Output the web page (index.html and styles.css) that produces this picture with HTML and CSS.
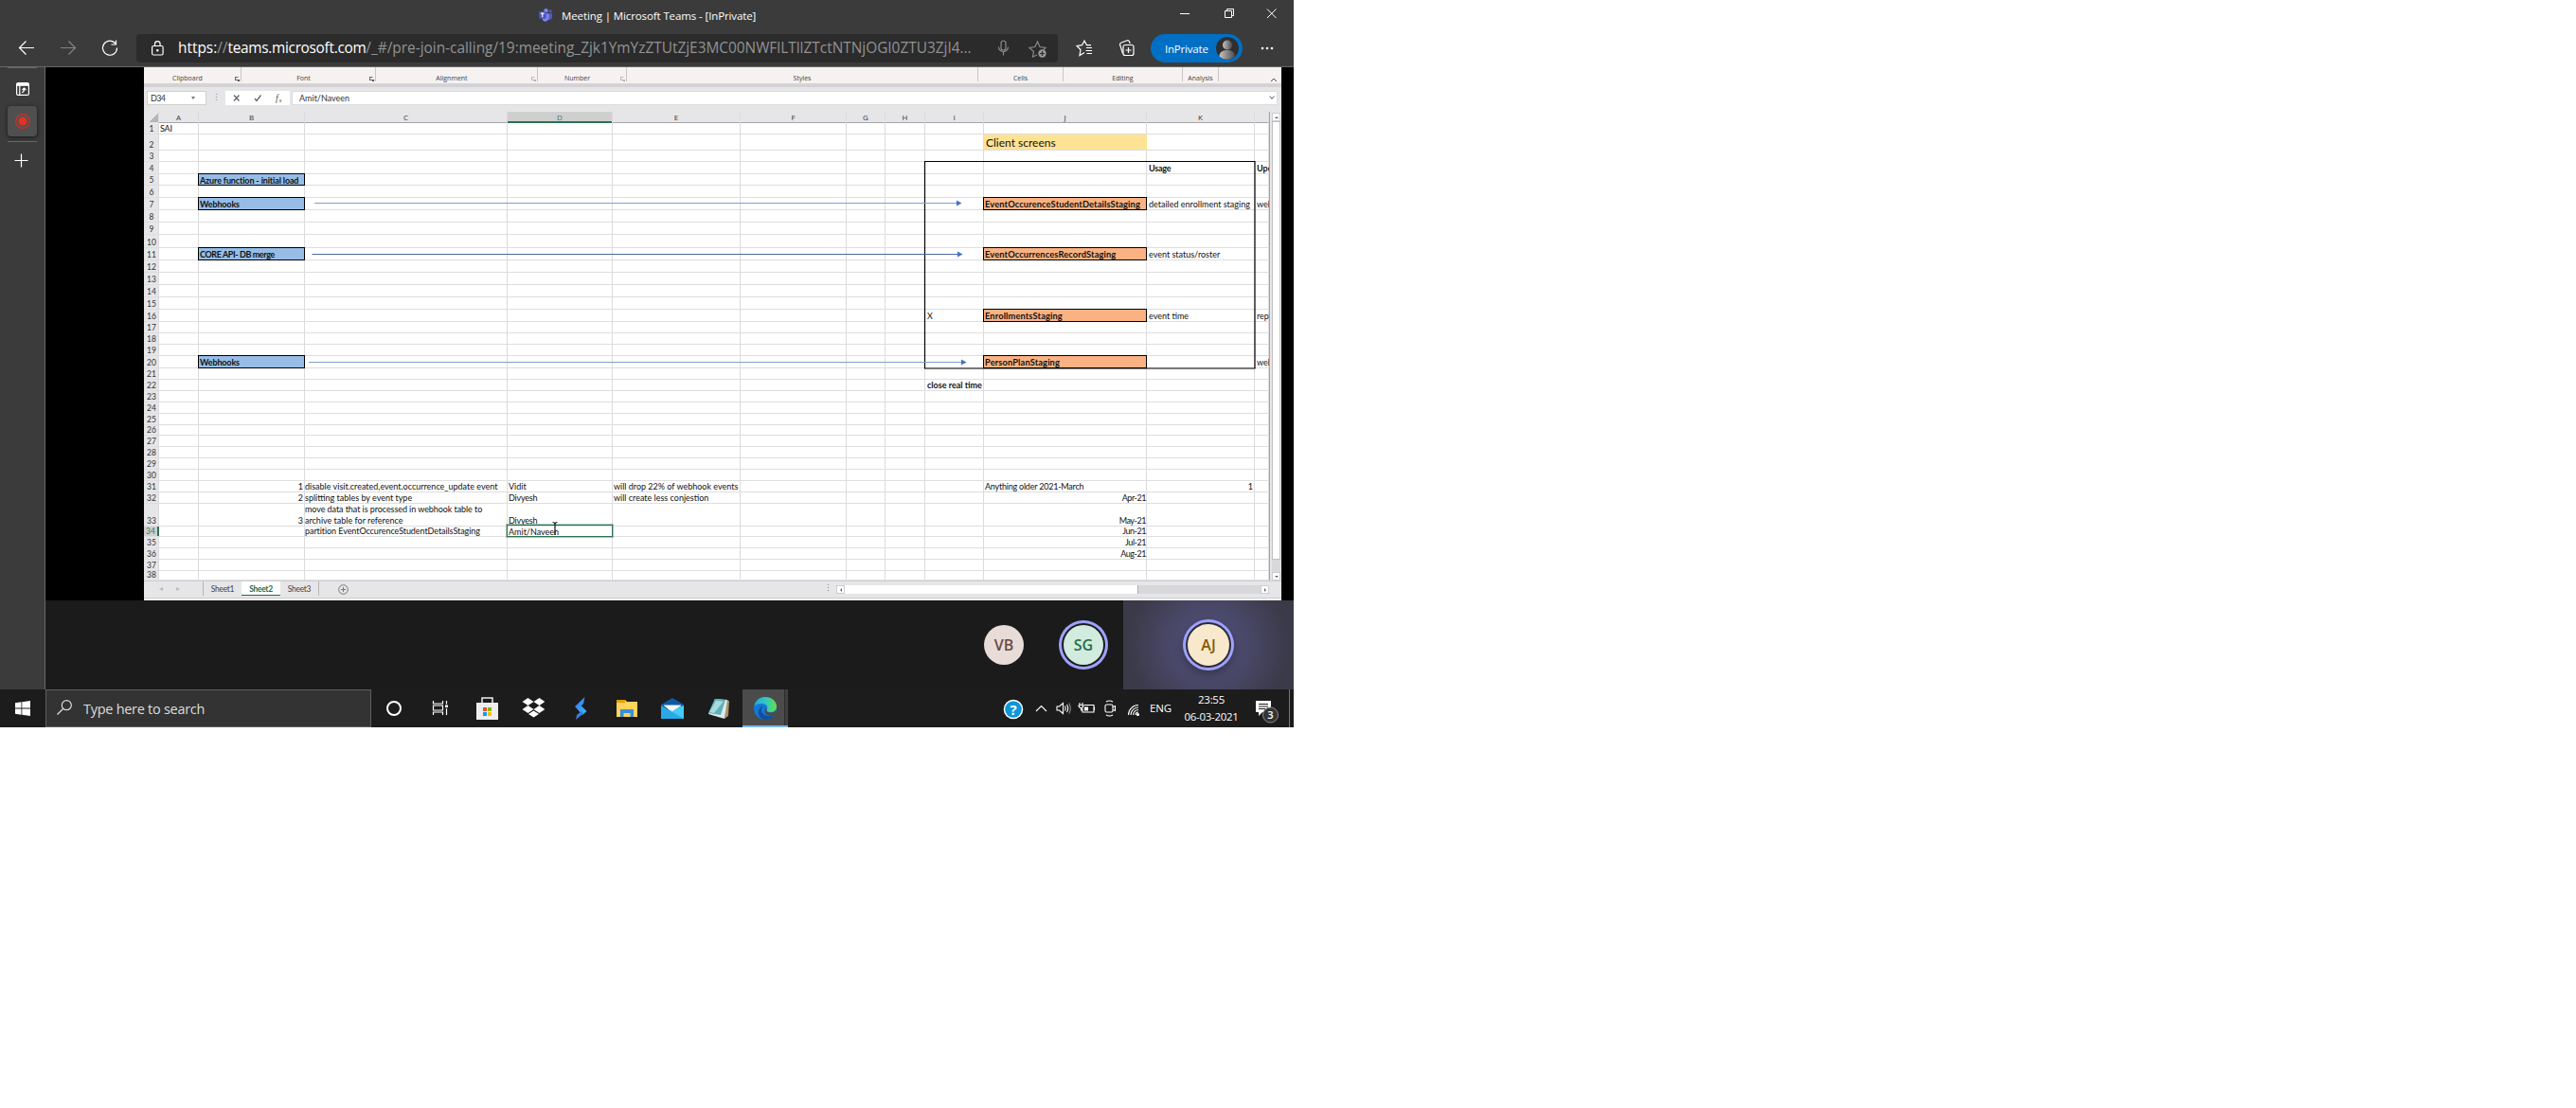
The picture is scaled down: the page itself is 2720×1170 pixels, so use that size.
FILE: index.html
```html
<!DOCTYPE html>
<html lang="en">
<head>
<meta charset="utf-8">
<title>Meeting | Microsoft Teams</title>
<link rel="stylesheet" href="styles.css">
</head>
<body>
<div class="desktop">
  <header class="titlebar">
    <div class="title">
      <svg class="teams" viewBox="0 0 16 16"><circle cx="8" cy="2.800" r="2.400" fill="#7b83eb"/><circle cx="13" cy="3.600" r="1.700" fill="#5059c9"/><path d="M10 6h5v4.500a2.800 2.800 0 0 1-5 1.500z" fill="#5059c9"/><path d="M4 6h7.500v5.500a4 4 0 0 1-7.500 1.500z" fill="#7b83eb"/><rect y="4" width="8" height="8" rx=".8" fill="#4b53bc"/><path d="M2 6h4M4 6v4.500" stroke="#fff" stroke-width="1.200"/></svg>
      <span>Meeting | Microsoft Teams - [InPrivate]</span>
    </div>
    <svg class="winctl" viewBox="0 0 110 28" fill="none" stroke="#fff"><path d="M0 14.500h10M47.500 11.500h7v7h-7zM49.500 11.500v-2h7v7h-2M92 9.500l9.500 9.500M101.500 9.500L92 19"/></svg>
  </header>

  <nav class="toolbar">
    <svg class="navicons" viewBox="0 0 144 30" fill="none" stroke="#fff" stroke-width="1.200"><path d="M36 14.500H20.500M27.500 7.500l-7 7 7 7"/><path stroke="#858585" d="M64 14.500h15.500M72.500 7.500l7 7-7 7"/><path d="M122 10.200a7.500 7.500 0 1 0 1.500 4.300M122.500 6.500v4.500H117.500"/></svg>
    <div class="address">
      <svg class="lock" viewBox="0 0 13 16" fill="none" stroke="#fff" stroke-width="1.200"><rect x=".6" y="5.500" width="11.500" height="9.500" rx="1.500"/><path d="M3.500 5.500V3.500a2.800 2.800 0 0 1 5.600 0v2"/><circle cx="6.300" cy="10.300" r=".7" fill="#fff"/></svg>
      <span class="url"><span class="host">https:<i>//</i></span><span class="host domain">teams.microsoft.com</span><span>/_#/pre-join-calling/19:meeting_Zjk1YmYzZTUtZjE3MC00NWFlLTllZTctNTNjOGI0ZTU3ZjI4...</span></span>
      <svg class="addricons" viewBox="0 0 54 20" fill="none" stroke="#8a8a8a" stroke-width="1.200"><rect x="4" y="2" width="5" height="10" rx="2.500"/><path d="M1.500 8.500a5 5 0 0 0 10 0M6.500 13.500v4"/><path d="M42 17l-4.500 2 1-5.500-4.500-4 5.800-1L42.500 3 45 8.500l6 1-2 2"/><circle cx="47.500" cy="15.500" r="4.200" fill="#999" stroke="none"/><path d="M45 15.500h5M47.500 13v5" stroke="#2b2b2b"/></svg>
    </div>
    <svg class="favicons" viewBox="0 0 62 20" fill="none" stroke="#fff" stroke-width="1.200"><path d="M9 14.500l-5 3 1-6L1 7.500l5.500-.8L9 2l2.500 4.700h4.500M11 9.500h6M10.500 12.500h6.500M11.500 15.500H17"/><path d="M49.500 15.500l-3-9.500a2 2 0 0 1 1.500-2l6-2.200a2 2 0 0 1 2.500 1.200l.8 2"/><rect x="50" y="6.500" width="11" height="11" rx="2"/><path d="M55.500 9v6M52.500 12h6"/></svg>
    <div class="pill"><span>InPrivate</span>
      <svg viewBox="0 0 24 24" class="avatar"><defs><linearGradient id="g"><stop offset="0" stop-color="#c4c4c4"/><stop offset="1" stop-color="#4a4a4a"/></linearGradient></defs><circle cx="12" cy="12" r="12" fill="#2f2f2f"/><circle cx="12" cy="8.500" r="5" fill="url(#g)"/><path d="M3.500 20.500c0-5 4-6.500 8.500-6.500s8 1.500 8 6.500a12 12 0 0 1-16.500 0z" fill="url(#g)"/></svg>
    </div>
    <svg class="dots" viewBox="0 0 14 4" fill="#fff"><circle cx="2" cy="2" r="1.300"/><circle cx="7" cy="2" r="1.300"/><circle cx="12" cy="2" r="1.300"/></svg>
  </nav>

  <div class="middle">
    <aside class="sidebar">
      <svg class="tabicon" viewBox="0 0 14 14" fill="none" stroke="#fff" stroke-width="1.200"><rect x=".6" y=".6" width="12.800" height="12.800" rx="1.500"/><path d="M1 2.300h12" stroke-width="3"/><path d="M3.800 3v10.500M6 10.500c2 0 2.500-1 2.500-4M6.500 8l2-2 2 2"/></svg>
      <div class="rec"><svg viewBox="0 0 16 16"><circle cx="8" cy="8" r="7.300" fill="none" stroke="#d93025" stroke-width="1.200"/><circle cx="8" cy="8" r="4.500" fill="#e03226"/></svg></div>
      <svg class="add" viewBox="0 0 15 15" stroke="#fff" stroke-width="1.200"><path d="M7.500 .5v14M.5 7.500h14"/></svg>
    </aside>

    <main class="stage">
      <section class="excel">
        <div class="ribbon">
          <div class="grp g1"><span>Clipboard</span><b></b></div>
          <div class="grp g2"><span>Font</span><b></b></div>
          <div class="grp g3"><span>Alignment</span><b class="off"></b></div>
          <div class="grp g4"><span>Number</span><b class="off"></b></div>
          <div class="grp g5"><span>Styles</span></div>
          <div class="grp g6"><span>Cells</span></div>
          <div class="grp g7"><span>Editing</span></div>
          <div class="grp g8"><span>Analysis</span></div>
          <svg class="chev" viewBox="0 0 8 5" fill="none" stroke="#555"><path d="M1 4l3-3 3 3"/></svg>
        </div>
        <div class="formula">
          <div class="namebox"><span>D34</span><i class="down"></i></div>
          <div class="grip">⋮</div>
          <svg class="fx" viewBox="0 0 68 15" fill="none" stroke="#666" stroke-width="1.300"><path d="M9 4.500l5.500 6M14.500 4.500L9 10.500M31 8l2 2.500 4.500-6"/><text x="53" y="11" class="fxt">f</text><text x="56.500" y="12" class="fxs">x</text></svg>
          <div class="finput"><span>Amit/Naveen</span><i class="vee"></i></div>
        </div>
        <div class="sheetwrap">
          <div class="sheet">
            <div class="cols">
              <div class="corner"></div><div>A</div><div>B</div><div>C</div><div class="sel">D</div><div>E</div><div>F</div><div>G</div><div>H</div><div>I</div><div>J</div><div>K</div><div></div>
            </div>
            <div class="rows">
              <div class="row"><b>1</b><span class="cA tight">SAI</span></div>
              <div class="row"><b>2</b><span class="cJ yellow">Client screens</span></div>
              <div class="row"><b>3</b></div>
              <div class="row"><b>4</b><span class="cK bold tight">Usage</span><span class="cL bold">Upd</span></div>
              <div class="row"><b>5</b><span class="cB blue">Azure function - initial load</span></div>
              <div class="row"><b>6</b></div>
              <div class="row"><b>7</b><span class="cB blue">Webhooks</span><span class="cJ orange">EventOccurenceStudentDetailsStaging</span><span class="cK">detailed enrollment staging</span><span class="cL">web</span></div>
              <div class="row"><b>8</b></div>
              <div class="row"><b>9</b></div>
              <div class="row"><b>10</b></div>
              <div class="row"><b>11</b><span class="cB blue core">CORE API- DB merge</span><span class="cJ orange">EventOccurrencesRecordStaging</span><span class="cK">event status/roster</span></div>
              <div class="row"><b>12</b></div>
              <div class="row"><b>13</b></div>
              <div class="row"><b>14</b></div>
              <div class="row"><b>15</b></div>
              <div class="row"><b>16</b><span class="cI">X</span><span class="cJ orange">EnrollmentsStaging</span><span class="cK">event time</span><span class="cL">repo</span></div>
              <div class="row"><b>17</b></div>
              <div class="row"><b>18</b></div>
              <div class="row"><b>19</b></div>
              <div class="row"><b>20</b><span class="cB blue">Webhooks</span><span class="cJ orange">PersonPlanStaging</span><span class="cL">web</span></div>
              <div class="row"><b>21</b></div>
              <div class="row"><b>22</b><span class="cI bold">close real time</span></div>
              <div class="row"><b>23</b></div>
              <div class="row"><b>24</b></div>
              <div class="row"><b>25</b></div>
              <div class="row"><b>26</b></div>
              <div class="row"><b>27</b></div>
              <div class="row"><b>28</b></div>
              <div class="row"><b>29</b></div>
              <div class="row"><b>30</b></div>
              <div class="row"><b>31</b><span class="cB num">1</span><span class="cC">disable visit.created,event.occurrence_update event</span><span class="cD">Vidit</span><span class="cE">will drop 22% of webhook events</span><span class="cJ tight">Anything older 2021-March</span><span class="cK num">1</span></div>
              <div class="row"><b>32</b><span class="cB num">2</span><span class="cC">splitting tables by event type</span><span class="cD tight">Divyesh</span><span class="cE">will create less conjestion</span><span class="cJ num date">Apr-21</span></div>
              <div class="row"><b>33</b><span class="cB num">3</span><span class="cC wrap"><span class="snug">move data that is processed in webhook table to</span><br>archive table for reference</span><span class="cD tight">Divyesh</span><span class="cJ num date">May-21</span></div>
              <div class="row active"><b>34</b><span class="cC snug">partition EventOccurenceStudentDetailsStaging</span><span class="cD cur">Amit/Naveen</span><span class="cJ num date">Jun-21</span></div>
              <div class="row"><b>35</b><span class="cJ num date">Jul-21</span></div>
              <div class="row"><b>36</b><span class="cJ num date">Aug-21</span></div>
              <div class="row"><b>37</b></div>
              <div class="row"><b>38</b></div>
            </div>
            <svg class="overlay" viewBox="0 0 1188 495" fill="none">
              <path d="M824.500 52.500h348.500v218.500H824.500z" stroke="#000" stroke-width="1.200"/>
              <path d="M180 96.500h679M174 264.500h691" stroke="#7f9fcc"/><path d="M177.500 150.500h684" stroke="#4d6a9e"/>
              <path d="M858 93.500l5.500 3-5.500 3zM859 147.500l5.500 3-5.500 3zM863 261.500l5.500 3-5.500 3z" fill="#4472c4"/>
              <path d="M431.500 433.500q2.500 0 2.500 2q0-2 2.500-2M434 435v12" stroke="#111" stroke-width="1.200"/>
            </svg>
          </div>
          <div class="vscroll"><i class="btn up"></i><i class="thumb"></i><i class="track"></i><i class="btn dn"></i></div>
        </div>
        <div class="tabs">
          <span class="arr">◂</span><span class="arr">▸</span>
          <div class="tab first">Sheet1</div><div class="tab on">Sheet2</div><div class="tab last">Sheet3</div>
          <svg class="plus" viewBox="0 0 11 11" fill="none" stroke="#777"><circle cx="5.500" cy="5.500" r="4.800"/><path d="M5.500 3v5M3 5.500h5"/></svg>
          <span class="grip2">⋮</span>
          <div class="hscroll"><i class="btn lf"></i><i class="thumb"></i><i class="track"></i><i class="btn rt"></i></div>
        </div>
      </section>
      <section class="people">
        <div class="face vb">VB</div>
        <div class="face sg">SG</div>
        <div class="tile"><div class="face aj">AJ</div></div>
      </section>
    </main>
  </div>

  <footer class="taskbar">
    <div class="start"><svg viewBox="0 0 16 16" fill="#fff"><path d="M0 2.200l6.500-.9v6.300H0zM7.300 1.200L16 0v7.600H7.300zM0 8.400h6.500v6.300L0 13.800zM7.300 8.400H16V16l-8.700-1.200z"/></svg></div>
    <div class="search"><svg viewBox="0 0 16 16" fill="none" stroke="#ddd" stroke-width="1.200"><circle cx="10.300" cy="5.700" r="5"/><path d="M6.500 9.500L.5 15.500"/></svg><span>Type here to search</span></div>
    <div class="apps">
      <svg viewBox="0 0 24 24" fill="none"><circle cx="12" cy="12" r="7" stroke="#fff" stroke-width="2"/></svg>
      <svg viewBox="0 0 24 24" fill="none" stroke="#fff" stroke-width="1.200"><path d="M4.500 4v3h10V4M4.500 19v-3h10v3M4.500 9h10v5h-10zM18.500 4v3.500M18.500 12v7"/><path d="M17 8.500h3v2.500h-3z" fill="#fff" stroke="none"/></svg>
      <svg viewBox="0 0 24 24"><path d="M7 7V1h11v6" fill="none" stroke="#eee" stroke-width="1.500"/><path d="M1 6h23v18H1z" fill="#eee"/><path d="M8 11h4v4H8z" fill="#f25022"/><path d="M13 11h4v4h-4z" fill="#7fba00"/><path d="M8 16h4v4H8z" fill="#00a4ef"/><path d="M13 16h4v4h-4z" fill="#ffb900"/></svg>
      <svg viewBox="0 0 24 24" fill="#fff"><path d="M6.500 1l6 4-6 4-6-4zM18.500 1l6 4-6 4-6-4zM6.500 9l6 4-6 4-6-4zM18.500 9l6 4-6 4-6-4zM12.500 14.500l5.500 3.500-5.500 3.500L7 18z"/></svg>
      <svg viewBox="0 0 24 24"><defs><linearGradient id="s" x2="1" y2="1"><stop offset="0" stop-color="#3e67f2"/><stop offset="1" stop-color="#2fc7ee"/></linearGradient></defs><path d="M17.500 0l-1.500 7-6 6-3-3zM7 10l4-3.500 8.500 8.500-4.500 4z" fill="url(#s)"/><path d="M8 24l1-5 5-4 2 2.500z" fill="#3b7de0"/></svg>
      <svg viewBox="0 0 24 24"><path d="M2 3h9l2 2h11v16H2z" fill="#ffd45c"/><path d="M2 3h9v3H2z" fill="#e3a008"/><path d="M6 13h14v8h-3.500v-4h-7v4H6z" fill="#3b8fd8"/></svg>
      <svg viewBox="0 0 24 24"><path d="M0 8l12-7 12 7v4H0z" fill="#0c59a4"/><path d="M2.500 8.500h19L12 17z" fill="#f5f5f5"/><path d="M0 9l12 7 12-7v14H0z" fill="#2aa9ea"/><path d="M24 9v14L9 14z" fill="#45cbf7"/><path d="M3 9h18l-9 6z" fill="#f5f5f5"/></svg>
      <svg viewBox="0 0 24 24"><path d="M20 3l3 1-1 16-4 3z" fill="#a79268"/><path d="M8 2l13 1-3 20L1 18z" fill="#dfe9e9"/><path d="M8 2l11 1-5 16L1 17z" fill="#5fb0b8"/><path d="M9 4l8 .5L7 17l-5-1z" fill="#a9dadd"/></svg>
      <div class="edge"><svg viewBox="0 0 24 24"><defs><linearGradient id="e1" x1="0" x2="1"><stop offset="0" stop-color="#27a8e0"/><stop offset=".55" stop-color="#35c9bd"/><stop offset="1" stop-color="#66dd44"/></linearGradient></defs><circle cx="12" cy="12" r="12" fill="#1478d4"/><path d="M.3 10C1.500 4 6 0 12 0c7 0 12 4.500 12 10 0 4-3 6-6.500 6-3 0-4.500-1-4-2.500 1.500-2 1-5-2.500-6C7.500 6.500 3 7 .3 10z" fill="url(#e1)"/><path d="M8 13c0 6 6 9 14 6-3 4-6 5-10 5-5 0-8-5-7-9 .6-3 2-5 5.500-6C8.500 10 8 11.500 8 13z" fill="#0f50a0"/><path d="M13.500 13.500c-.5 2 1.500 3 4 3 2 0 4-.6 5-2l1 1.500-2 3.500c-6 1.500-10-1-10-4.500 0-1.500.5-2.500 1-3 .8.2 1.200.7 1 1.500z" fill="#4b4b4b"/></svg></div>
    </div>
    <div class="tray">
      <svg class="help" viewBox="0 0 22 22"><circle cx="11" cy="11" r="10.300" fill="#fff"/><circle cx="11" cy="11" r="8.800" fill="#0d97d8"/><text x="11" y="16.500">?</text></svg>
      <svg class="trayicons" viewBox="0 0 112 20" fill="none" stroke="#fff" stroke-width="1.100"><path d="M1 13l5.500-5.500L12 13"/><path d="M23 8h2.500l4-3.500v11l-4-3.500H23zM31.500 7.500q1.500 2.500 0 5M33.500 6q2.500 4 0 8"/><path stroke="#888" d="M35.800 4.500q3 5.500 0 11"/><path d="M52 6.500h10v7.500H50v-4M62.500 8.500v3.500M47 4v2.500M50 4v2.500M46 6.500h5q0 3-2.500 3t-2.500-3M48.500 9.500v2.500h2"/><path d="M52.500 9h3v3h-3z" fill="#fff"/><rect x="74" y="6" width="8" height="8" rx="1.500"/><path d="M82 8.500l2.500-1v5l-2.500-1M75 3q3.500-2 7 0M75 17q3.500 2 7 0"/><path d="M98.500 17A10.500 10.500 0 0 1 109 6.500M101 17a8 8 0 0 1 8-8M103.500 17a5.500 5.500 0 0 1 5.500-5.500M106 17a3 3 0 0 1 3-3"/><circle cx="108.500" cy="16.500" r="1" fill="#fff"/></svg>
      <span class="lang">ENG</span>
      <div class="clock"><span>23:55</span><span>06-03-2021</span></div>
      <svg class="note" viewBox="0 0 26 26"><path d="M1 1h16v12H8l-4 4v-4H1z" fill="#fff"/><path d="M4 4.500h10M4 7h10M4 9.500h7" stroke="#1c1c1c"/><circle cx="16.500" cy="16" r="8" fill="#343434" stroke="#8a8a8a"/><text x="16.500" y="20">3</text></svg>
      <i class="peek"></i>
    </div>
  </footer>
</div>
</body>
</html>
```
FILE: styles.css
```css
* { box-sizing: border-box; }
body { margin: 0; background: #fff; font-family: "Open Sans", "Noto Sans", sans-serif; }
svg { display: block; flex: none; }
i { font-style: normal; }
.desktop { width: 1366px; height: 768px; display: flex; flex-direction: column; background: #3b3b3b; overflow: hidden; }

/* browser frame */
.titlebar { height: 36px; display: flex; justify-content: space-between; color: #fff; }
.title { display: flex; gap: 9px; padding: 8px 0 0 569px; font-size: 11.500px; letter-spacing: -.11px; line-height: 18px; white-space: nowrap; }
.teams { width: 15px; height: 16px; }
.winctl { width: 110px; height: 28px; margin-right: 10px; }
.toolbar { height: 35px; display: flex; border-bottom: 1px solid #686868; }
.navicons { width: 144px; height: 30px; }
.address { width: 973px; height: 30px; background: #2b2b2b; border-radius: 4px; display: flex; align-items: center; padding-left: 16px; }
.lock { width: 13px; height: 16px; }
.url { margin-left: 15px; width: 865px; font-size: 15.400px; color: #929292; white-space: nowrap; display: flex; line-height: 32px; }
.host { color: #fff; }
.host i { color: #929292; }
.domain { letter-spacing: -.3px; }
.addricons { width: 54px; height: 20px; }
.favicons { width: 62px; height: 20px; margin: 5px 17px 0 19px; }
.pill { width: 97px; height: 30px; border-radius: 15px; background: #006fc4; color: #fff; font-size: 11.500px; letter-spacing: -.2px; display: flex; align-items: center; justify-content: space-between; padding: 0 4px 0 15px; white-space: nowrap; }
.avatar { width: 24px; height: 24px; }
.dots { width: 14px; height: 4px; margin: 13px 0 0 19px; }

.middle { height: 657px; display: flex; }
.sidebar { width: 48px; border-right: 1px solid #686868; display: flex; flex-direction: column; padding: 0 8px; }
.sidebar::before { content: ""; width: 31px; height: 1px; background: #686868; }
.tabicon { width: 14px; height: 14px; margin: 15px 0 0 9px; }
.rec { width: 31px; height: 32px; margin: 11px 0 18px; background: #4f4f4f; border-radius: 4px; box-shadow: 0 1px 4px #0009; padding: 8px; }
.rec svg { width: 16px; height: 16px; }
.rec::after { content: ""; display: block; width: 31px; height: 1px; margin: 13px 0 12px -8px; background: #686868; }
.add { width: 15px; height: 15px; margin: 0 0 0 7px; }
.stage { width: 1318px; display: flex; flex-direction: column; background: #000; }

/* spreadsheet frame */
.excel { width: 1201px; height: 563px; margin-left: 104px; background: #e6e6e8; overflow: hidden; }
.ribbon { height: 17px; background: #f5f2f1; display: flex; font-size: 7px; color: #444; line-height: 8px; }
.grp { position: relative; text-align: center; padding-top: 8px; height: 15px; border-right: 1px solid #c9c6c6; white-space: nowrap; }
.grp b { position: absolute; right: 2px; top: 10px; width: 4px; height: 4px; border: 1px solid #666; border-right-color: transparent; }
.grp b::after { content: ""; position: absolute; right: -2px; bottom: -2px; width: 2px; height: 2px; background: #555; }
.grp b.off { opacity: .4; }
.g1 { width: 103px; padding-right: 10px; }
.g2 { width: 142px; padding-right: 10px; }
.g3 { width: 171px; padding-right: 10px; }
.g4 { width: 94px; padding-right: 10px; }
.g5 { width: 371px; }
.g6 { width: 90px; }
.g7 { width: 126px; }
.g8 { width: 38px; }
.chev { width: 8px; height: 5px; margin: 11px 0 0 54px; }
.formula { height: 30px; border-top: 4px solid #d3d3d5; display: flex; padding: 4px 3px 0; font-family: Lato, sans-serif; font-size: 9px; color: #333; line-height: 14px; }
.namebox { width: 63px; height: 15px; background: #fff; border: 1px solid #d0d0d0; display: flex; justify-content: space-between; padding: 0 11px 0 3px; letter-spacing: -.6px; }
.down { border: 2px solid transparent; border-top: 3px solid #777; margin-top: 5px; height: 0; }
.grip { width: 20px; text-align: center; color: #888; }
.fx { width: 68px; height: 15px; background: #fff; }
.fxt { font: italic 10px "Liberation Serif", serif; fill: #555; stroke: none; }
.fxs { font: italic 7px "Liberation Serif", serif; fill: #555; stroke: none; }
.finput { width: 1041px; height: 15px; margin-left: 2px; background: #fff; border: 1px solid #dcdcdc; display: flex; justify-content: space-between; padding: 0 3px 0 7px; }
.vee { width: 4px; height: 4px; border: 1px solid #777; border-width: 0 1px 1px 0; transform: rotate(45deg); margin-top: 3px; }

/* cells */
.sheetwrap { height: 495px; display: flex; }
.sheet { width: 1188px; display: grid; grid-template: 495px / 1188px; overflow: hidden; }
.sheet > * { grid-area: 1 / 1; }
.cols, .row { display: grid; grid-template-columns: 16px 42px 112px 214px 111px 135px 112px 41px 42px 62px 172px 114px 15px; }
.cols > div { border-right: 1px solid #dcdadd; text-align: center; font-size: 8px; line-height: 11px; color: #333; background: linear-gradient(#e6e6e8 11px, #a5a5a7 11px 12px, #fff 12px); }
.cols > .corner { background: linear-gradient(135deg, transparent 6px, #b5b5b7 6px) 6px 2px / 9px 9px no-repeat, #e6e6e8; }
.cols > .sel { background: linear-gradient(#cfcfd0 10px, #2c7152 10px 12px, #fff 12px); color: #3c7a5e; }
.rows { margin-top: 12px; display: grid; grid-template-rows: 12px 17px 12px 13px 12px 13px 13px 13px 13px 14px 13px 13px 13px 13px 13px 13px 12px 12px 12px 13px 12px 12px 12px 12px 12px 11px 12px 12px 12px 12px 12px 12px 24px 11px 12px 12px 12px 10px; font-family: Lato, Carlito, sans-serif; font-size: 9px; line-height: 10px; color: #111; }
.row { grid-template-rows: 100%; border-bottom: 1px solid #dedddf; align-items: end; white-space: nowrap; }
.row > * { grid-row: 1; }
.row > b { font-weight: 400; color: #333; text-align: center; grid-column: 1; font-size: 8.500px; }
.row.active > b { background: #d0d0d1; border-right: 2px solid #2c7152; color: #3c7a5e; }
.cA { grid-column: 2; padding-left: 1px; }
.cB { grid-column: 3; }
.cC { grid-column: 4; }
.cD { grid-column: 5; padding-left: 1px; }
.cE { grid-column: 6; padding-left: 1px; }
.cI { grid-column: 10; padding-left: 2px; }
.cJ { grid-column: 11; padding-left: 1px; }
.cK { grid-column: 12; padding-left: 2px; }
.cL { grid-column: 13; padding-left: 2px; overflow: hidden; }
.num { text-align: right; padding-right: 2px; }
.date { letter-spacing: -.45px; padding-right: 1px; }
.tight { letter-spacing: -.22px; }
.snug { letter-spacing: -.07px; }
.bold { font-weight: 700; }
.blue, .orange { height: calc(100% + 2px); margin: -1px 0 -1px -1px; border: 1px solid #000; background: #97bde6; font-weight: 700; padding-left: 1px; line-height: 13px; letter-spacing: -.14px; }
.core { letter-spacing: -.4px; }
.orange { background: #fab283; font-size: 9.300px; letter-spacing: .12px; }
.yellow { height: 100%; background: #ffe395; font-size: 12px; line-height: 18px; padding-left: 2px; }
.wrap { line-height: 12px; margin-bottom: -1px; }
.cur { border: 1px solid #2c7152; outline: 1px solid #2c715266; margin: -1px 0 -1px -1px; height: 13px; line-height: 13px; }
.overlay { width: 1188px; height: 495px; z-index: 1; }
.vscroll { width: 13px; display: flex; flex-direction: column; padding: 1px 1px 0 2px; border-left: 1px solid #a5a5a7; }
.btn { width: 9px; height: 9px; background: #fff; border: 1px solid #ccc; display: flex; align-items: center; justify-content: center; }
.btn::after { content: ""; border: 2px solid transparent; }
.up::after { border-bottom-color: #666; margin-top: -2px; }
.dn::after { border-top-color: #666; margin-bottom: -2px; }
.lf::after { border-right-color: #666; margin-left: -2px; }
.rt::after { border-left-color: #666; margin-right: -2px; }
.vscroll .thumb { width: 9px; height: 463px; background: #fff; border: 1px solid #c0c0c0; }
.vscroll .track { width: 9px; height: 13px; background: #d8d7d9; }
.tabs { height: 21px; display: flex; border-top: 1px solid #cfcfd1; font-family: Lato, sans-serif; font-size: 8.500px; letter-spacing: -.3px; line-height: 15px; color: #444; background: linear-gradient(transparent 17px, #cfcfd1 17px 18px, #f0f0f0 18px); }
.arr { width: 18px; text-align: center; color: #bbb; font-size: 8px; }
.arr:first-child { margin-left: 9px; }
.tab { height: 15px; text-align: center; padding-top: 1px; white-space: nowrap; }
.first { width: 41px; margin-left: 17px; border-left: 1px solid #b5b5b5; }
.on { width: 41px; background: #fff; color: #1e6b49; font-weight: 700; border-bottom: 1px solid #1e6b49; }
.last { width: 41px; border-right: 1px solid #b5b5b5; }
.plus { width: 11px; height: 11px; margin: 3px 0 0 20px; }
.grip2 { margin-left: 502px; width: 6px; color: #777; }
.hscroll { display: flex; margin: 4px 0 0 7px; }
.hscroll .thumb { width: 310px; height: 9px; background: #fff; border-right: 1px solid #aaa; }
.hscroll .track { width: 129px; height: 9px; background: #d8d7d9; }

/* participants */
.people { height: 94px; background: #1b1b1b; display: flex; align-items: center; justify-content: flex-end; }
.face { width: 42px; height: 42px; border-radius: 50%; display: flex; align-items: center; justify-content: center; font-size: 16px; font-weight: 600; flex: none; }
.vb { background: #e8dcd8; color: #6d4a40; margin-right: 42px; }
.sg { background: #d2ebdf; color: #256b49; margin-right: 21px; box-shadow: 0 0 0 2px #1b1b1b, 0 0 0 5px #9ea2ff; }
.tile { width: 180px; height: 94px; background: radial-gradient(circle at 50% 50%, #56548a 0, #4a4868 40px, #3b3a49 85px); display: flex; align-items: center; justify-content: center; }
.aj { width: 44px; height: 44px; background: #f8e9cd; color: #835b00; box-shadow: 0 0 0 2px #2b2a3a, 0 0 0 5px #9ea2ff, 0 4px 10px 5px #2228; }

/* taskbar */
.taskbar { height: 40px; background: #1c1c1c; display: flex; color: #fff; }
.start { width: 48px; padding: 12px 16px; }
.start svg { width: 16px; height: 16px; }
.search { width: 344px; background: #333; border: 1px solid #5f5f5f; display: flex; align-items: center; gap: 12px; padding-left: 11px; font-size: 14.500px; letter-spacing: -.28px; color: #ddd; white-space: nowrap; }
.search svg { width: 16px; height: 16px; margin-top: -2px; }
.apps { display: flex; align-items: center; gap: 25px; padding-left: 12px; }
.apps svg { width: 24px; height: 24px; }
.edge { width: 48px; height: 40px; margin-left: -12px; padding: 8px 12px; background: linear-gradient(90deg, #4b4b4b 44px, #2c2c2c 44px 45px, #404040 45px); border-bottom: 2px solid #76b9ed; }
.tray { margin-left: auto; display: flex; }
.help { width: 22px; height: 22px; margin: 10px 12px 0 0; }
.help text { font: 700 15px "Open Sans", sans-serif; fill: #fff; text-anchor: middle; }
.trayicons { width: 112px; height: 20px; margin-top: 10px; }
.lang { width: 24px; margin-left: 9px; font-size: 11.500px; letter-spacing: -.1px; line-height: 39px; }
.clock { width: 64px; margin-left: 9px; font-size: 11.500px; letter-spacing: -.3px; display: flex; flex-direction: column; text-align: center; line-height: 18px; padding-top: 2px; white-space: nowrap; }
.note { width: 26px; height: 26px; margin: 11px 0 0 14px; }
.note text { font: 600 11px "Open Sans", sans-serif; fill: #fff; text-anchor: middle; }
.peek { width: 5px; margin-left: 10px; border-left: 1px solid #777; }
```
